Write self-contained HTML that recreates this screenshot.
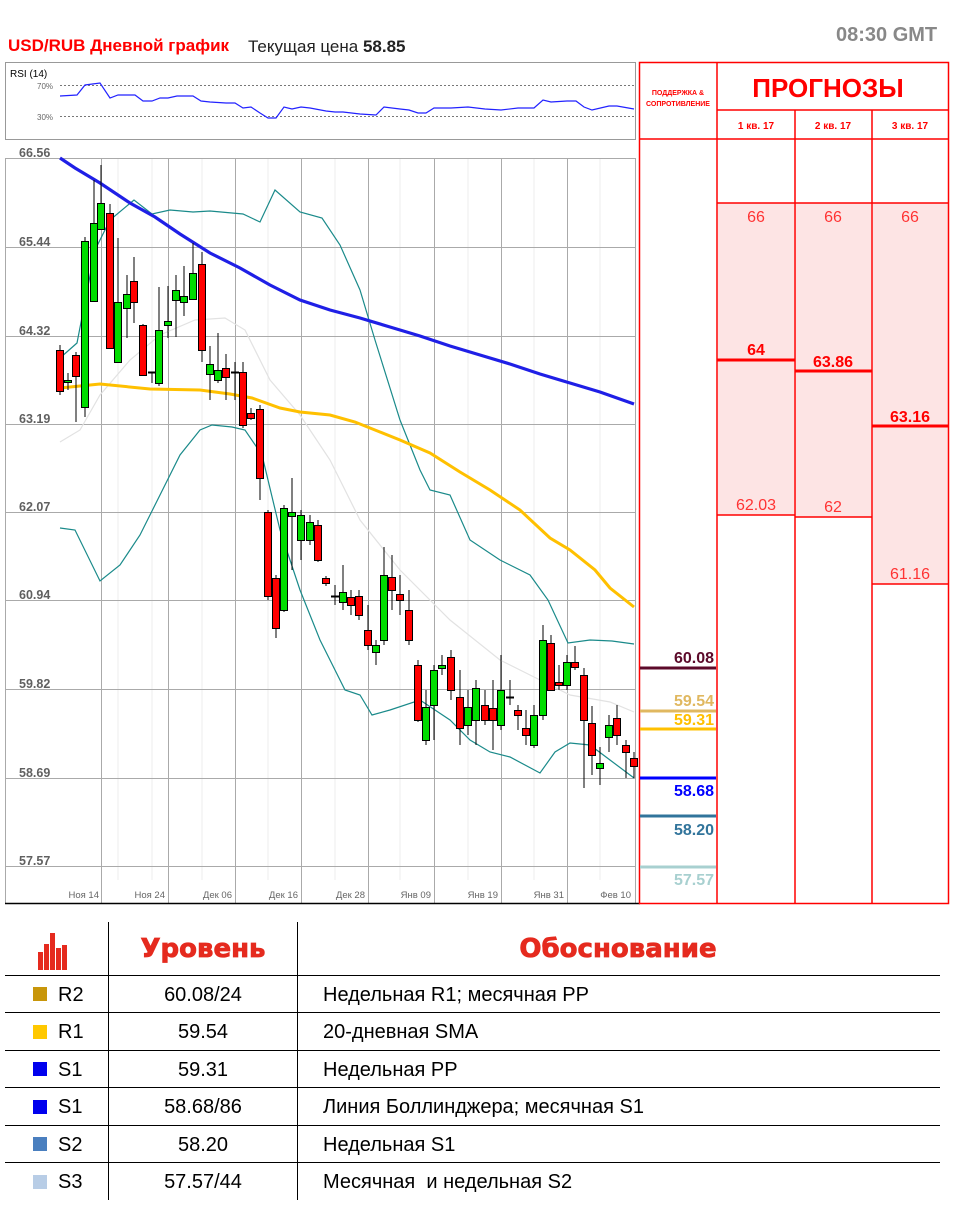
<!DOCTYPE html>
<html><head><meta charset="utf-8">
<style>
body{margin:0;width:973px;height:1213px;background:#fff;position:relative;overflow:hidden;font-family:"Liberation Sans",sans-serif}
.t{position:absolute;white-space:nowrap}
</style></head><body>
<div class="t" style="left:8px;top:36px;font-size:17px;font-weight:bold;color:#f00">USD/RUB Дневной график</div>
<div class="t" style="left:248px;top:37px;font-size:17px;color:#222">Текущая цена <b>58.85</b></div>
<div class="t" style="left:836px;top:24px;font-size:20px;font-weight:bold;color:#888">08:30 GMT</div>

<svg width="973" height="1213" style="position:absolute;left:0;top:0" font-family="Liberation Sans, sans-serif">
<!-- RSI panel -->
<rect x="5.5" y="62.5" width="630" height="77" fill="#fff" stroke="#999"/>
<text x="10" y="77" font-size="10" fill="#000">RSI (14)</text>
<text x="37" y="89" font-size="8" fill="#666">70%</text>
<text x="37" y="120" font-size="8" fill="#666">30%</text>
<line x1="60" y1="85.5" x2="634" y2="85.5" stroke="#777" stroke-dasharray="2,2"/>
<line x1="60" y1="116.5" x2="634" y2="116.5" stroke="#777" stroke-dasharray="2,2"/>
<polyline fill="none" stroke="#22f" stroke-width="1.2" points="60,96 77,95 85,85 100,83 110,98 118,95 135,95 143,101 152,101 160,98 168,98 177,96 193,96 201,101 210,102 226,103 235,103 243,108 251,107 260,113 268,118 276,118 284,107 292,109 301,107 310,108 326,111 335,112 343,112 360,114 376,115 384,107 400,109 409,110 418,113 426,113 434,108 451,108 468,107 485,109 501,110 518,108 534,108 543,100 551,102 567,101 576,101 584,107 592,110 609,106 617,106 634,109"/>

<!-- main chart -->
<rect x="5.5" y="150" width="630" height="753" fill="#fff"/>
<g stroke="#eee" stroke-width="1">
<line x1="118" y1="158" x2="118" y2="880"/><line x1="152" y1="158" x2="152" y2="880"/><line x1="202" y1="158" x2="202" y2="880"/><line x1="268" y1="158" x2="268" y2="880"/><line x1="335" y1="158" x2="335" y2="880"/><line x1="400" y1="158" x2="400" y2="880"/><line x1="468" y1="158" x2="468" y2="880"/><line x1="534" y1="158" x2="534" y2="880"/><line x1="600" y1="158" x2="600" y2="880"/>
</g>
<g stroke="#aaa" stroke-width="1">
<line x1="5" y1="158.5" x2="636" y2="158.5"/><line x1="5" y1="247.5" x2="636" y2="247.5"/><line x1="5" y1="336.5" x2="636" y2="336.5"/><line x1="5" y1="424.5" x2="636" y2="424.5"/><line x1="5" y1="512.5" x2="636" y2="512.5"/><line x1="5" y1="600.5" x2="636" y2="600.5"/><line x1="5" y1="689.5" x2="636" y2="689.5"/><line x1="5" y1="778.5" x2="636" y2="778.5"/><line x1="5" y1="866.5" x2="636" y2="866.5"/>
<line x1="101.5" y1="158" x2="101.5" y2="903"/><line x1="168.5" y1="158" x2="168.5" y2="903"/><line x1="235.5" y1="158" x2="235.5" y2="903"/><line x1="301.5" y1="158" x2="301.5" y2="903"/><line x1="368.5" y1="158" x2="368.5" y2="903"/><line x1="434.5" y1="158" x2="434.5" y2="903"/><line x1="501.5" y1="158" x2="501.5" y2="903"/><line x1="567.5" y1="158" x2="567.5" y2="903"/><line x1="635.5" y1="158" x2="635.5" y2="903"/>
<line x1="5.5" y1="158" x2="5.5" y2="903"/>
</g>
<line x1="5" y1="903.5" x2="640" y2="903.5" stroke="#000" stroke-width="1.5"/>
<g font-size="12.5" font-weight="bold" fill="#606060">
<text x="19" y="157">66.56</text><text x="19" y="246">65.44</text><text x="19" y="335">64.32</text><text x="19" y="423">63.19</text><text x="19" y="511">62.07</text><text x="19" y="599">60.94</text><text x="19" y="688">59.82</text><text x="19" y="777">58.69</text><text x="19" y="865">57.57</text>
</g>
<g font-size="9.5" fill="#666" text-anchor="end">
<text x="99" y="898">Ноя 14</text><text x="165" y="898">Ноя 24</text><text x="232" y="898">Дек 06</text><text x="298" y="898">Дек 16</text><text x="365" y="898">Дек 28</text><text x="431" y="898">Янв 09</text><text x="498" y="898">Янв 19</text><text x="564" y="898">Янв 31</text><text x="631" y="898">Фев 10</text>
</g>

<polyline fill="none" stroke="#e2e2e2" stroke-width="1.2" points="60,442 80,430 100,395 130,360 160,335 195,320 225,318 245,330 270,380 300,415 330,460 360,520 400,570 450,620 500,660 540,680 570,695 610,702 634,712"/>
<polyline fill="none" stroke="#1a8a8a" stroke-width="1.2" points="60,358 77,343 95,250 110,220 134,200 152,214 170,210 193,212 210,211 243,214 260,222 275,190 300,212 322,218 340,245 360,290 375,340 400,420 420,470 430,490 450,495 470,540 500,560 530,575 548,600 568,643 590,640 612,641 634,644"/>
<polyline fill="none" stroke="#1a8a8a" stroke-width="1.2" points="60,528 75,530 100,581 120,565 140,535 160,495 180,455 200,430 212,425 232,427 245,430 262,455 280,530 300,590 320,640 345,690 360,695 372,715 390,710 420,700 450,720 470,740 490,752 510,757 540,773 555,752 570,743 590,745 610,760 634,778"/>
<polyline fill="none" stroke="#ffc000" stroke-width="3" points="60,388 100,384 150,389 200,390 230,394 252,398 280,408 300,412 330,415 355,422 380,432 400,440 430,453 460,472 490,490 520,510 550,538 570,550 595,570 610,588 634,607"/>
<polyline fill="none" stroke="#1f1fe6" stroke-width="3.2" points="60,158 75,168 100,183 130,203 155,217 180,234 210,253 240,268 270,285 300,300 330,310 360,318 390,327 420,336 450,346 480,355 510,364 540,374 570,383 600,392 634,404"/>

<g stroke="#000" stroke-width="1">
<line x1="60" y1="345" x2="60" y2="395"/><rect x="56.5" y="350.5" width="7" height="41" fill="#f00"/>
<line x1="68" y1="373" x2="68" y2="390"/><rect x="64.5" y="380.5" width="7" height="2" fill="#0d0"/>
<line x1="76" y1="352" x2="76" y2="422"/><rect x="72.5" y="355.5" width="7" height="21" fill="#f00"/>
<line x1="85" y1="237" x2="85" y2="417"/><rect x="81.5" y="241.5" width="7" height="166" fill="#0d0"/>
<line x1="94" y1="180" x2="94" y2="301"/><rect x="90.5" y="223.5" width="7" height="78" fill="#0d0"/>
<line x1="101" y1="165" x2="101" y2="229"/><rect x="97.5" y="203.5" width="7" height="26" fill="#0d0"/>
<line x1="110" y1="204" x2="110" y2="348"/><rect x="106.5" y="213.5" width="7" height="135" fill="#f00"/>
<line x1="118" y1="238" x2="118" y2="362"/><rect x="114.5" y="302.5" width="7" height="60" fill="#0d0"/>
<line x1="127" y1="275" x2="127" y2="338"/><rect x="123.5" y="294.5" width="7" height="14" fill="#0d0"/>
<line x1="134" y1="257" x2="134" y2="323"/><rect x="130.5" y="281.5" width="7" height="21" fill="#f00"/>
<line x1="143" y1="324" x2="143" y2="375"/><rect x="139.5" y="325.5" width="7" height="50" fill="#f00"/>
<line x1="152" y1="372" x2="152" y2="383"/><rect x="148.5" y="372" width="7" height="1" fill="#000"/>
<line x1="159" y1="287" x2="159" y2="386"/><rect x="155.5" y="330.5" width="7" height="53" fill="#0d0"/>
<line x1="168" y1="286" x2="168" y2="338"/><rect x="164.5" y="321.5" width="7" height="4" fill="#0d0"/>
<line x1="176" y1="275" x2="176" y2="337"/><rect x="172.5" y="290.5" width="7" height="10" fill="#0d0"/>
<line x1="184" y1="266" x2="184" y2="316"/><rect x="180.5" y="296.5" width="7" height="6" fill="#0d0"/>
<line x1="193" y1="243" x2="193" y2="299"/><rect x="189.5" y="273.5" width="7" height="26" fill="#0d0"/>
<line x1="202" y1="252" x2="202" y2="362"/><rect x="198.5" y="264.5" width="7" height="86" fill="#f00"/>
<line x1="210" y1="346" x2="210" y2="400"/><rect x="206.5" y="364.5" width="7" height="10" fill="#0d0"/>
<line x1="218" y1="333" x2="218" y2="383"/><rect x="214.5" y="370.5" width="7" height="10" fill="#0d0"/>
<line x1="226" y1="354" x2="226" y2="400"/><rect x="222.5" y="368.5" width="7" height="9" fill="#f00"/>
<line x1="235" y1="362" x2="235" y2="400"/><rect x="231.5" y="372" width="7" height="1" fill="#000"/>
<line x1="243" y1="362" x2="243" y2="428"/><rect x="239.5" y="372.5" width="7" height="53" fill="#f00"/>
<line x1="251" y1="408" x2="251" y2="420"/><rect x="247.5" y="413.5" width="7" height="5" fill="#f00"/>
<line x1="260" y1="405" x2="260" y2="500"/><rect x="256.5" y="409.5" width="7" height="69" fill="#f00"/>
<line x1="268" y1="510" x2="268" y2="600"/><rect x="264.5" y="512.5" width="7" height="84" fill="#f00"/>
<line x1="276" y1="575" x2="276" y2="638"/><rect x="272.5" y="578.5" width="7" height="50" fill="#f00"/>
<line x1="284" y1="505" x2="284" y2="612"/><rect x="280.5" y="508.5" width="7" height="102" fill="#0d0"/>
<line x1="292" y1="478" x2="292" y2="570"/><rect x="288.5" y="512.5" width="7" height="4" fill="#0d0"/>
<line x1="301" y1="510" x2="301" y2="560"/><rect x="297.5" y="515.5" width="7" height="25" fill="#0d0"/>
<line x1="310" y1="515" x2="310" y2="545"/><rect x="306.5" y="522.5" width="7" height="18" fill="#0d0"/>
<line x1="318" y1="520" x2="318" y2="562"/><rect x="314.5" y="525.5" width="7" height="35" fill="#f00"/>
<line x1="326" y1="576" x2="326" y2="586"/><rect x="322.5" y="578.5" width="7" height="5" fill="#f00"/>
<line x1="335" y1="585" x2="335" y2="605"/><rect x="331.5" y="596" width="7" height="1" fill="#000"/>
<line x1="343" y1="565" x2="343" y2="610"/><rect x="339.5" y="592.5" width="7" height="10" fill="#0d0"/>
<line x1="351" y1="590" x2="351" y2="615"/><rect x="347.5" y="597.5" width="7" height="8" fill="#f00"/>
<line x1="359" y1="590" x2="359" y2="620"/><rect x="355.5" y="596.5" width="7" height="19" fill="#f00"/>
<line x1="368" y1="605" x2="368" y2="650"/><rect x="364.5" y="630.5" width="7" height="15" fill="#f00"/>
<line x1="376" y1="640" x2="376" y2="665"/><rect x="372.5" y="645.5" width="7" height="7" fill="#0d0"/>
<line x1="384" y1="547" x2="384" y2="645"/><rect x="380.5" y="575.5" width="7" height="65" fill="#0d0"/>
<line x1="392" y1="555" x2="392" y2="610"/><rect x="388.5" y="577.5" width="7" height="13" fill="#f00"/>
<line x1="400" y1="575" x2="400" y2="615"/><rect x="396.5" y="594.5" width="7" height="6" fill="#f00"/>
<line x1="409" y1="590" x2="409" y2="645"/><rect x="405.5" y="610.5" width="7" height="30" fill="#f00"/>
<line x1="418" y1="660" x2="418" y2="722"/><rect x="414.5" y="665.5" width="7" height="55" fill="#f00"/>
<line x1="426" y1="690" x2="426" y2="745"/><rect x="422.5" y="707.5" width="7" height="33" fill="#0d0"/>
<line x1="434" y1="665" x2="434" y2="740"/><rect x="430.5" y="670.5" width="7" height="35" fill="#0d0"/>
<line x1="442" y1="655" x2="442" y2="675"/><rect x="438.5" y="665.5" width="7" height="3" fill="#0d0"/>
<line x1="451" y1="650" x2="451" y2="700"/><rect x="447.5" y="657.5" width="7" height="33" fill="#f00"/>
<line x1="460" y1="670" x2="460" y2="745"/><rect x="456.5" y="697.5" width="7" height="31" fill="#f00"/>
<line x1="468" y1="690" x2="468" y2="735"/><rect x="464.5" y="707.5" width="7" height="18" fill="#0d0"/>
<line x1="476" y1="680" x2="476" y2="745"/><rect x="472.5" y="688.5" width="7" height="32" fill="#0d0"/>
<line x1="485" y1="690" x2="485" y2="725"/><rect x="481.5" y="705.5" width="7" height="15" fill="#f00"/>
<line x1="493" y1="680" x2="493" y2="750"/><rect x="489.5" y="708.5" width="7" height="12" fill="#f00"/>
<line x1="501" y1="655" x2="501" y2="730"/><rect x="497.5" y="690.5" width="7" height="35" fill="#0d0"/>
<line x1="510" y1="680" x2="510" y2="705"/><rect x="506.5" y="697" width="7" height="1" fill="#000"/>
<line x1="518" y1="705" x2="518" y2="730"/><rect x="514.5" y="710.5" width="7" height="5" fill="#f00"/>
<line x1="526" y1="710" x2="526" y2="745"/><rect x="522.5" y="728.5" width="7" height="7" fill="#f00"/>
<line x1="534" y1="705" x2="534" y2="748"/><rect x="530.5" y="715.5" width="7" height="30" fill="#0d0"/>
<line x1="543" y1="625" x2="543" y2="720"/><rect x="539.5" y="640.5" width="7" height="75" fill="#0d0"/>
<line x1="551" y1="635" x2="551" y2="690"/><rect x="547.5" y="643.5" width="7" height="47" fill="#f00"/>
<line x1="559" y1="665" x2="559" y2="690"/><rect x="555.5" y="682.5" width="7" height="3" fill="#f00"/>
<line x1="567" y1="655" x2="567" y2="690"/><rect x="563.5" y="662.5" width="7" height="23" fill="#0d0"/>
<line x1="575" y1="646" x2="575" y2="670"/><rect x="571.5" y="662.5" width="7" height="5" fill="#f00"/>
<line x1="584" y1="668" x2="584" y2="788"/><rect x="580.5" y="675.5" width="7" height="45" fill="#f00"/>
<line x1="592" y1="706" x2="592" y2="775"/><rect x="588.5" y="723.5" width="7" height="32" fill="#f00"/>
<line x1="600" y1="747" x2="600" y2="785"/><rect x="596.5" y="763.5" width="7" height="5" fill="#0d0"/>
<line x1="609" y1="715" x2="609" y2="752"/><rect x="605.5" y="725.5" width="7" height="12" fill="#0d0"/>
<line x1="617" y1="705" x2="617" y2="745"/><rect x="613.5" y="718.5" width="7" height="17" fill="#f00"/>
<line x1="626" y1="740" x2="626" y2="778"/><rect x="622.5" y="745.5" width="7" height="7" fill="#f00"/>
<line x1="634" y1="752" x2="634" y2="778"/><rect x="630.5" y="758.5" width="7" height="8" fill="#f00"/>
</g>

<rect x="718" y="203" width="76" height="312" fill="#fde4e4"/>
<rect x="795" y="203" width="76" height="314" fill="#fde4e4"/>
<rect x="873" y="203" width="76" height="381" fill="#fde4e4"/>
<g stroke="#f00" stroke-width="1.5" fill="none">
<rect x="639.5" y="62.5" width="309" height="841"/>
<line x1="717" y1="62" x2="717" y2="903"/>
<line x1="795" y1="110" x2="795" y2="903"/>
<line x1="872" y1="110" x2="872" y2="903"/>
<line x1="717" y1="110" x2="949" y2="110"/>
<line x1="639" y1="139" x2="949" y2="139"/>
<line x1="717" y1="203" x2="949" y2="203"/>
<line x1="717" y1="515" x2="795" y2="515"/>
<line x1="795" y1="517" x2="872" y2="517"/>
<line x1="872" y1="584" x2="949" y2="584"/>
</g>
<g stroke="#f00" stroke-width="3">
<line x1="717" y1="360" x2="795" y2="360"/>
<line x1="795" y1="371" x2="872" y2="371"/>
<line x1="872" y1="426" x2="949" y2="426"/>
</g>
<g fill="#f00" text-anchor="middle" font-weight="bold">
<text x="678" y="95" font-size="7">ПОДДЕРЖКА &amp;</text>
<text x="678" y="106" font-size="7">СОПРОТИВЛЕНИЕ</text>
<text x="828" y="97" font-size="26">ПРОГНОЗЫ</text>
<text x="756" y="129" font-size="10">1 кв. 17</text>
<text x="833" y="129" font-size="10">2 кв. 17</text>
<text x="910" y="129" font-size="10">3 кв. 17</text>
<text x="756" y="355" font-size="16">64</text>
<text x="833" y="367" font-size="16">63.86</text>
<text x="910" y="422" font-size="16">63.16</text>
</g>
<g fill="#f33" text-anchor="middle" font-size="16">
<text x="756" y="222">66</text><text x="833" y="222">66</text><text x="910" y="222">66</text>
<text x="756" y="510">62.03</text><text x="833" y="512">62</text><text x="910" y="579">61.16</text>
</g>
<g stroke-width="3">
<line x1="640" y1="668" x2="716" y2="668" stroke="#5c0a2a"/>
<line x1="640" y1="711" x2="716" y2="711" stroke="#e0b860"/>
<line x1="640" y1="729" x2="716" y2="729" stroke="#ffc000"/>
<line x1="640" y1="778" x2="716" y2="778" stroke="#00f"/>
<line x1="640" y1="816" x2="716" y2="816" stroke="#31749b"/>
<line x1="640" y1="867" x2="716" y2="867" stroke="#a8d0d0"/>
</g>
<g font-size="16" font-weight="bold" text-anchor="end">
<text x="714" y="663" fill="#5c0a2a">60.08</text>
<text x="714" y="706" fill="#e0b860">59.54</text>
<text x="714" y="725" fill="#ffc000">59.31</text>
<text x="714" y="796" fill="#00f">58.68</text>
<text x="714" y="835" fill="#31749b">58.20</text>
<text x="714" y="885" fill="#a8d0d0">57.57</text>
</g>

<g fill="#e52a1e">
<rect x="38" y="952" width="5" height="18"/><rect x="44" y="944" width="5" height="26"/><rect x="50" y="933" width="5" height="37"/><rect x="56" y="948" width="5" height="22"/><rect x="62" y="945" width="5" height="25"/>
</g>
<g stroke="#000" stroke-width="1">
<line x1="108.5" y1="922" x2="108.5" y2="1200"/>
<line x1="297.5" y1="922" x2="297.5" y2="1200"/>
<line x1="5" y1="975.5" x2="940" y2="975.5"/>
<line x1="5" y1="1012.5" x2="940" y2="1012.5"/>
<line x1="5" y1="1050.5" x2="940" y2="1050.5"/>
<line x1="5" y1="1087.5" x2="940" y2="1087.5"/>
<line x1="5" y1="1125.5" x2="940" y2="1125.5"/>
<line x1="5" y1="1162.5" x2="940" y2="1162.5"/>
</g>
<g fill="#e52a1e" font-size="26" font-weight="bold" text-anchor="middle" font-family="DejaVu Sans, sans-serif" stroke="#e52a1e" stroke-width="0.8">
<text x="203" y="957">Уровень</text>
<text x="618" y="957">Обоснование</text>
</g>
<rect x="33" y="987" width="14" height="14" fill="#c8960a"/>
<rect x="33" y="1025" width="14" height="14" fill="#ffc800"/>
<rect x="33" y="1062" width="14" height="14" fill="#0000ee"/>
<rect x="33" y="1100" width="14" height="14" fill="#0000ee"/>
<rect x="33" y="1137" width="14" height="14" fill="#4a7fbf"/>
<rect x="33" y="1175" width="14" height="14" fill="#b8cde6"/>
<g font-size="20" fill="#000">
<text x="58" y="1001">R2</text><text x="58" y="1038">R1</text><text x="58" y="1076">S1</text><text x="58" y="1113">S1</text><text x="58" y="1151">S2</text><text x="58" y="1188">S3</text>
<g text-anchor="middle">
<text x="203" y="1001">60.08/24</text><text x="203" y="1038">59.54</text><text x="203" y="1076">59.31</text><text x="203" y="1113">58.68/86</text><text x="203" y="1151">58.20</text><text x="203" y="1188">57.57/44</text>
</g>
<text x="323" y="1001">Недельная R1; месячная PP</text>
<text x="323" y="1038">20-дневная SMA</text>
<text x="323" y="1076">Недельная PP</text>
<text x="323" y="1113">Линия Боллинджера; месячная S1</text>
<text x="323" y="1151">Недельная S1</text>
<text x="323" y="1188" xml:space="preserve">Месячная  и недельная S2</text>
</g>
</svg>
</body></html>
